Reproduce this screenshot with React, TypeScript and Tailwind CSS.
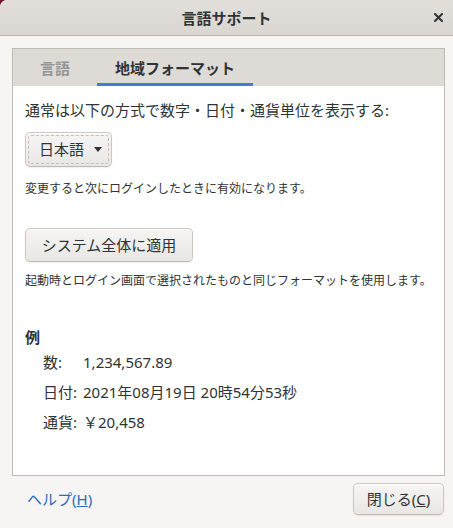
import React from "react";

const btn =
  "rounded-[5px] border border-[#cdc7c2] border-b-[#bfb8b1] bg-gradient-to-b from-[#f6f5f4] to-[#e9e7e4] shadow-[inset_0_1px_0_white,0_1px_2px_rgba(0,0,0,0.07)]";

const CloseIcon = () => (
  <svg width="9" height="9" viewBox="0 0 9 9">
    <path d="M1 1L8 8M8 1L1 8" stroke="#2e3436" strokeWidth="2" strokeLinecap="square" />
  </svg>
);

const SampleRow = ({ label, value }: { label: string; value: string }) => (
  <>
    <div className="flex h-[30px] items-center">{label}</div>
    <div className="flex h-[30px] items-center">{value}</div>
  </>
);

const App: React.FC = () => {
  return (
    <div className="h-[528px] w-[453px] bg-[#6e1a22] font-['Noto_Sans','Noto_Sans_CJK_JP',sans-serif] text-[#2e3436]">
      <div className="flex h-full flex-col overflow-hidden rounded-tl-[7px] bg-[#f6f5f4]">
        {/* title bar */}
        <div className="grid h-[36px] grid-cols-[1fr_auto_1fr] items-center border-b border-[#bfb8b1] bg-gradient-to-b from-[#e2dfdb] to-[#dad6d2]">
          <div />
          <span className="text-[15px] font-bold leading-[20px]">言語サポート</span>
          <div className="flex justify-end pr-[10px]">
            <CloseIcon />
          </div>
        </div>

        {/* notebook */}
        <div className="ml-[12px] mr-[8px] mt-[12px] flex h-[428px] flex-col border border-[#c0bab4] bg-white">
          <div className="flex h-[37px] items-stretch bg-[#dedad6] text-[15px] font-bold leading-[20px]">
            <div className="ml-[9px] flex items-center px-[18px] text-[#929595]">言語</div>
            <div className="ml-[9px] flex items-center border-b-[3px] border-[#3f7fcf] px-[18px] pt-[3px]">
              地域フォーマット
            </div>
          </div>

          <div className="flex flex-col items-start px-[12px] pt-[14px]">
            <p className="text-[15px] leading-[20px]">
              通常は以下の方式で数字・日付・通貨単位を表示する:
            </p>
            <button className={`${btn} mt-[12px] h-[35px] w-[87px] p-[2px]`}>
              <div className="flex h-full items-center rounded-[3px] border border-dashed border-[#c2beba] pl-[10px] text-[15px]">
                <span>日本語</span>
                <svg className="ml-[10px]" width="8" height="5" viewBox="0 0 8 5">
                  <path d="M0 0H8L4 5Z" fill="#2e3436" />
                </svg>
              </div>
            </button>
            <p className="mt-[14px] text-[12px] leading-[16px]">
              変更すると次にログインしたときに有効になります。
            </p>
            <button className={`${btn} mt-[31px] h-[34px] w-[168px] text-[15px]`}>
              システム全体に適用
            </button>
            <p className="mt-[11px] text-[12px] leading-[16px]">
              起動時とログイン画面で選択されたものと同じフォーマットを使用します。
            </p>
            <p className="mt-[38px] text-[15px] font-bold leading-[20px]">例</p>
            <div className="grid grid-cols-[auto_1fr] gap-x-[6px] pl-[18px] text-[15px]">
              <SampleRow label="数:" value="1,234,567.89" />
              <SampleRow label="日付:" value="2021年08月19日 20時54分53秒" />
              <SampleRow label="通貨:" value="￥20,458" />
            </div>
          </div>
        </div>

        {/* footer */}
        <div className="mt-[7px] flex items-center justify-between pl-[27px] pr-[9px] text-[15px]">
          <span className="text-[#2b6cb8]">
            ヘルプ(<span className="underline">H</span>)
          </span>
          <button className={`${btn} h-[32px] w-[91px]`}>
            閉じる(<span className="underline">C</span>)
          </button>
        </div>
      </div>
    </div>
  );
};

export default App;
